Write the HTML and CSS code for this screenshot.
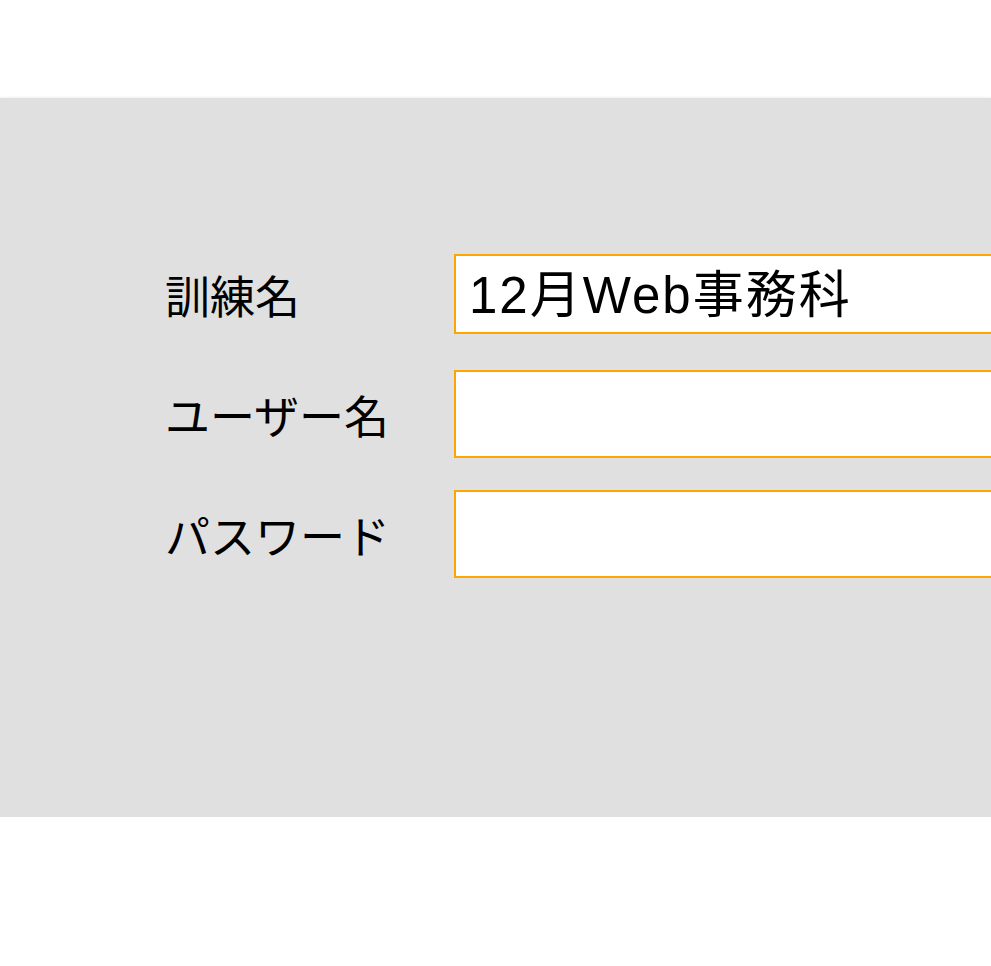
FILE: index.html
```html
<!DOCTYPE html>
<html lang="ja">
<head>
<meta charset="utf-8">
<title>ログイン</title>
<link rel="stylesheet" href="styles.css">
</head>
<body>
<div class="top"></div>
<main class="panel">
  <form class="login">
    <label class="label" for="course">訓練名</label>
    <input class="field field-first" id="course" type="text" value="12月Web事務科">
    <label class="label" for="user">ユーザー名</label>
    <input class="field" id="user" type="text">
    <label class="label" for="pass">パスワード</label>
    <input class="field" id="pass" type="password">
  </form>
</main>
</body>
</html>
```

FILE: styles.css
```css
html, body {
  margin: 0;
  padding: 0;
  background: #ffffff;
  overflow: hidden;
}
body {
  font-family: "Noto Sans CJK JP", "Liberation Sans", sans-serif;
  color: #000;
}
.top {
  height: 98px;
}
.panel {
  background: #e0e0e0;
  height: 719px;
  box-sizing: border-box;
  padding-top: 136px;
  padding-left: 165px;
  overflow: hidden;
  box-shadow: 0 1px 3px rgba(0, 0, 0, 0.25);
  position: relative;
}
.login {
  display: grid;
  grid-template-columns: 289px 700px;
  grid-auto-rows: 120px;
  align-items: center;
}
.label {
  font-size: 45px;
  line-height: 1;
  white-space: nowrap;
}
.field {
  box-sizing: border-box;
  height: 88px;
  width: 700px;
  border: 2px solid #ffa500;
  background: #fff;
  outline: none;
  margin: 0;
  padding: 0 13px;
  font-family: "Liberation Sans", "Noto Sans CJK JP", sans-serif;
  font-size: 51px;
  letter-spacing: 2px;
  color: #000;
}
.field-first {
  height: 80px;
  padding-bottom: 6px;
}
```
